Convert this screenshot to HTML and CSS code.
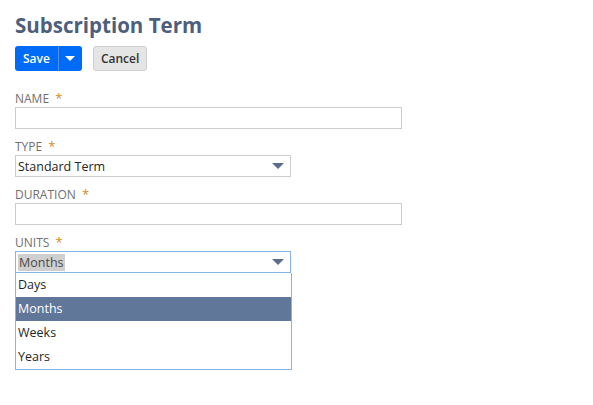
FILE: index.html
```html
<!DOCTYPE html>
<html lang="en">
<head>
    <meta charset="UTF-8">
    <title>Subscription Term</title>
    <link rel="stylesheet" href="styles.css">
</head>
<body>
    <div class="page">
        <h1 class="title">Subscription Term</h1>

        <div class="actions">
            <div class="split-button">
                <button class="btn-primary">Save</button>
                <button class="btn-primary btn-caret"><span class="caret-white"></span></button>
            </div>
            <button class="btn-secondary">Cancel</button>
        </div>

        <div class="field">
            <label class="field-label">Name <span class="req">*</span></label>
            <div class="text-input wide"></div>
        </div>

        <div class="field">
            <label class="field-label">Type <span class="req">*</span></label>
            <div class="select-input narrow">
                <span>Standard Term</span>
                <span class="caret"></span>
            </div>
        </div>

        <div class="field">
            <label class="field-label">Duration <span class="req">*</span></label>
            <div class="text-input wide"></div>
        </div>

        <div class="field">
            <label class="field-label">Units <span class="req">*</span></label>
            <div class="select-input narrow focused">
                <span class="selected-text">Months</span>
                <span class="caret"></span>
            </div>
            <ul class="dropdown-list">
                <li>Days</li>
                <li class="active">Months</li>
                <li>Weeks</li>
                <li>Years</li>
            </ul>
        </div>
    </div>
</body>
</html>
```

FILE: styles.css
```css
body {
    margin: 0;
    font-family: "Open Sans", Arial, sans-serif;
    background: #ffffff;
    color: #262626;
}

.page {
    padding: 10px 15px;
}

.title {
    margin: 0;
    font-size: 20.5px;
    font-weight: bold;
    color: #4d5f7c;
    line-height: 30px;
}

.actions {
    display: flex;
    align-items: center;
    margin-top: 6px;
    margin-bottom: 20px;
}

.split-button {
    display: flex;
}

.btn-primary {
    height: 25px;
    border: none;
    background: #006bf6;
    color: #ffffff;
    font-family: inherit;
    font-size: 12px;
    font-weight: 600;
    padding: 0 8px;
    border-radius: 3px 0 0 3px;
}

.btn-caret {
    width: 24px;
    padding: 0;
    border-left: 1px solid #4d93f5;
    border-radius: 0 3px 3px 0;
    display: flex;
    align-items: center;
    justify-content: center;
}

.caret-white {
    width: 0;
    height: 0;
    border-left: 5px solid transparent;
    border-right: 5px solid transparent;
    border-top: 5px solid #ffffff;
}

.btn-secondary {
    margin-left: 11px;
    height: 25px;
    padding: 0 7px;
    background: #e5e5e5;
    border: 1px solid #cfcfcf;
    border-radius: 3px;
    font-family: inherit;
    font-size: 12px;
    font-weight: 600;
    color: #333333;
}

.field {
    margin-bottom: 10px;
}

.field-label {
    display: block;
    font-size: 12px;
    text-transform: uppercase;
    color: #6f6f6f;
    line-height: 14px;
    margin-bottom: 1px;
}

.req {
    color: #d48a1e;
    font-size: 13px;
    margin-left: 3px;
}

.text-input,
.select-input {
    box-sizing: border-box;
    height: 22px;
    border: 1px solid #cccccc;
    background: #ffffff;
}

.wide {
    width: 387px;
}

.narrow {
    width: 276px;
}

.select-input {
    display: flex;
    align-items: center;
    justify-content: space-between;
    padding: 0 6px 0 2px;
    font-size: 12.5px;
    color: #262626;
}

.select-input.focused {
    border-color: #85b3e8;
}

.selected-text {
    background: #cfcfcf;
    color: #4a4a4a;
    padding: 0 1px;
}

.caret {
    width: 0;
    height: 0;
    border-left: 6px solid transparent;
    border-right: 6px solid transparent;
    border-top: 6px solid #5b6f8d;
}

.dropdown-list {
    box-sizing: border-box;
    width: 277px;
    margin: 0;
    padding: 0;
    list-style: none;
    border: 1px solid #85b3e8;
    border-top: none;
    font-size: 12.5px;
    color: #262626;
}

.dropdown-list li {
    height: 24px;
    line-height: 24px;
    padding-left: 2px;
}

.dropdown-list li.active {
    background: #607799;
    color: #ffffff;
}
```
